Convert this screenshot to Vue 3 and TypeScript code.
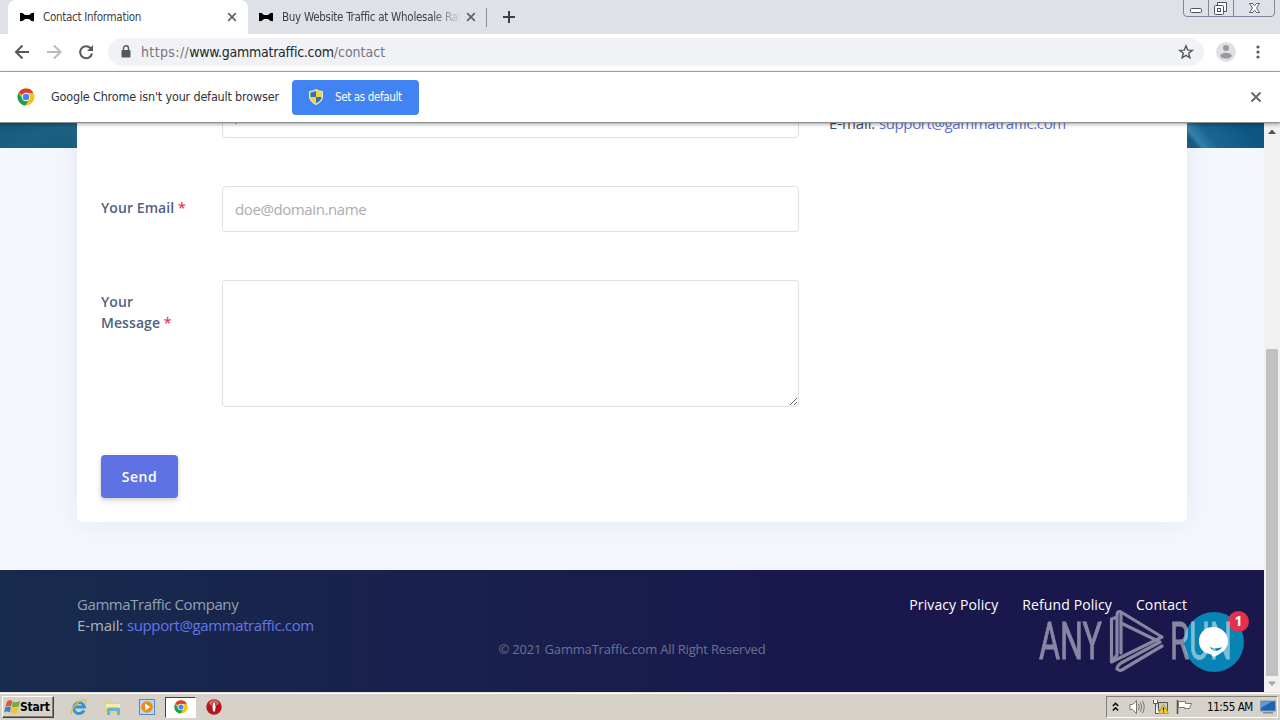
<script setup lang="ts">
interface Tab {
  title: string
  active: boolean
}

const tabs: Tab[] = [
  { title: 'Contact Information', active: true },
  { title: 'Buy Website Traffic at Wholesale Rates', active: false },
]

const footerLinks: string[] = ['Privacy Policy', 'Refund Policy', 'Contact']
</script>

<template>
  <div class="desktop">
    <header class="tabstrip">
      <div v-for="tab in tabs" :key="tab.title" class="tab" :class="{ active: tab.active }">
        <svg class="bow" width="16" height="10" viewBox="0 0 16 10">
          <path d="M1 1Q3 0 6 3h4Q13 0 15 1V9Q13 10 10 7H6Q3 10 1 9Z" fill="#000" />
        </svg>
        <span class="tab-title">{{ tab.title }}</span>
        <svg class="tab-close" width="10" height="10" viewBox="0 0 10 10">
          <path d="M1.200 1.200l7.600 7.600M8.800 1.200L1.200 8.800" stroke="#5f6368" stroke-width="1.700" />
        </svg>
      </div>
      <i class="tab-sep"></i>
      <svg class="new-tab" width="12" height="12" viewBox="0 0 12 12">
        <path d="M6 0v12M0 6h12" stroke="#3c4043" stroke-width="2" />
      </svg>
      <div class="win-buttons">
        <svg width="92" height="17" viewBox="0 0 92 17" fill="none">
          <path d="M.5 0V13Q.5 16.500 4 16.500H88Q91.500 16.500 91.500 13V0M25.500 0V16M50.500 0V16" stroke="#82869a" />
          <rect x="7.500" y="8.500" width="11" height="4" rx="1" stroke="#4c5064" fill="#fff" />
          <path d="M34.500 5.500V2.500H43.500V11.500H40.500" stroke="#4c5064" fill="#fff" />
          <rect x="31.500" y="5.500" width="9" height="9" rx="1" stroke="#4c5064" fill="#fff" />
          <rect x="34.500" y="8.500" width="3" height="3" stroke="#4c5064" />
          <path d="M66.500 3.500H69.500L71.500 5.800L73.500 3.500H76.500L73.500 8L76.500 12.500H73.500L71.500 10.200L69.500 12.500H66.500L69.500 8Z" stroke="#5c6072" fill="#fff" />
        </svg>
      </div>
    </header>

    <div class="toolbar">
      <svg width="96" height="20" viewBox="0 0 96 20" fill="none" stroke-width="2">
        <path d="M21 10H8.500M14.500 3.500L8 10L14.500 16.500" transform="translate(8 0)" stroke="#55585d" />
        <path d="M47 10H60M54 3.500L60.500 10L54 16.500" stroke="#b9bbbe" />
        <path d="M90.600 6.200A6 6 0 1 0 92 11.500" stroke="#55585d" />
        <path d="M93 3V9H87Z" fill="#55585d" />
      </svg>
      <div class="omnibox">
        <svg class="lock" width="10" height="13" viewBox="0 0 10 13">
          <rect x=".5" y="5" width="9" height="7.500" rx="1" fill="#55585d" />
          <path d="M2.500 5V3.300a2.500 2.500 0 0 1 5 0V5" fill="none" stroke="#55585d" stroke-width="1.400" />
        </svg>
        <span class="url"><span class="scheme">https://</span><b>www.gammatraffic.com</b>/contact</span>
        <svg class="star" width="16" height="16" viewBox="0 0 16 16">
          <path d="M8 1.800L9.700 6.100L14.300 6.400L10.700 9.300L11.900 13.800L8 11.300L4.100 13.800L5.300 9.300L1.700 6.400L6.300 6.100Z" fill="none" stroke="#55585d" stroke-width="1.400" />
        </svg>
      </div>
      <svg class="avatar" width="20" height="20" viewBox="0 0 20 20">
        <circle cx="10" cy="10" r="10" fill="#dfe0e2" />
        <circle cx="10" cy="6" r="3" fill="#97999c" />
        <ellipse cx="10" cy="13.700" rx="5.700" ry="2.900" fill="#97999c" />
      </svg>
      <svg class="kebab" width="4" height="14" viewBox="0 0 4 14" fill="#55585d">
        <circle cx="2" cy="2" r="1.600" /><circle cx="2" cy="7" r="1.600" /><circle cx="2" cy="12" r="1.600" />
      </svg>
    </div>

    <div class="infobar">
      <svg width="18" height="18" viewBox="0 0 18 18">
        <circle cx="9" cy="9" r="8.500" fill="#fbc116" />
        <path d="M9 9L1.600 4.800A8.500 8.500 0 0 1 16.400 4.800L9 5Z" fill="#df3b2f" />
        <path d="M1.600 4.800A8.500 8.500 0 0 0 8.500 17.500L12.400 11L5.600 11Z" fill="#1f9d55" />
        <circle cx="9" cy="9" r="4.200" fill="#fff" />
        <circle cx="9" cy="9" r="3.300" fill="#4285f4" />
      </svg>
      <span class="info-text">Google Chrome isn't your default browser</span>
      <button class="default-btn">
        <svg width="14" height="16" viewBox="0 0 14 16">
          <path d="M7 .5Q10 2.300 13.500 2.500V8Q13 13 7 15.500Q1 13 .5 8V2.500Q4 2.300 7 .5Z" fill="#f5d33c" stroke="#e4ecda" />
          <path d="M7 2V8H1.500V3.500Q4.500 3.300 7 2ZM7 8H12.500Q12 12 7 14.200Z" fill="#2b73c0" />
        </svg>
        <span>Set as default</span>
      </button>
      <svg class="info-close" width="12" height="12" viewBox="0 0 12 12">
        <path d="M1.500 1.500l9 9M10.500 1.500l-9 9" stroke="#63666a" stroke-width="1.800" />
      </svg>
    </div>

    <div class="viewport">
      <div class="page">
        <main class="hero-wrap">
          <section class="card">
            <form class="form" @submit.prevent>
              <div class="row">
                <label></label>
                <input type="text" placeholder="John Doe" />
              </div>
              <div class="row">
                <label>Your Email <em>*</em></label>
                <input type="text" placeholder="doe@domain.name" />
              </div>
              <div class="row">
                <label>Your Message <em>*</em></label>
                <textarea></textarea>
              </div>
              <button class="send">Send</button>
            </form>
            <aside class="side">E-mail: <a>support@gammatraffic.com</a></aside>
          </section>
        </main>
        <footer class="footer">
          <div class="footer-top">
            <p class="company">GammaTraffic Company<br /><span>E-mail: </span><a>support@gammatraffic.com</a></p>
            <nav><a v-for="link in footerLinks" :key="link">{{ link }}</a></nav>
          </div>
          <p class="copyright">© 2021 GammaTraffic.com All Right Reserved</p>
        </footer>
        <div class="chat">
          <svg width="60" height="60" viewBox="0 0 60 60">
            <circle cx="30" cy="30" r="30" fill="#0784b5" />
            <path d="M29 15C37 15 44 21 44 29C44 37 38 41 30 45L26 42C19 41 15 36 15 29C15 21 21 15 29 15Z" fill="#fff" />
            <path d="M26 35Q32 37.500 38 35Q36 39 31 39Q28 39 26 35Z" fill="#0784b5" />
          </svg>
          <span class="badge">1</span>
        </div>
      </div>
      <div class="scrollbar">
        <svg width="16" height="17" viewBox="0 0 16 17"><path d="M4 11L8 6.500L12 11Z" fill="#505050" /></svg>
        <i class="thumb"></i>
        <svg width="16" height="16" viewBox="0 0 16 16"><path d="M4 5.500L8 10L12 5.500Z" fill="#a3a3a3" /></svg>
      </div>
    </div>

    <div class="taskbar">
      <div class="start">
        <svg width="16" height="16" viewBox="0 0 16 16">
          <path d="M3 2.500Q5.500.500 8.300 2L7.200 7.500Q4.500 6 1.500 7.500Z" fill="#e4572c" />
          <path d="M9 2.500Q12 4 16 2L14.700 7.500Q11 9 7.900 7.800Z" fill="#6fae3c" />
          <path d="M1.300 8.300Q4 6.900 7 8.300L5.900 13.200Q3 11.700.2 13.200Z" fill="#3f7fc9" />
          <path d="M7.700 8.700Q11 10 14.500 8.300L13.300 13.700Q10 15.700 6.600 13.700Z" fill="#f3c02f" />
        </svg>
        <span>Start</span>
      </div>
      <div class="quick">
        <svg width="18" height="18" viewBox="0 0 18 18" fill="none">
          <path d="M14 12.500A5.500 5.500 0 1 1 14.500 9H5" stroke="#3394d6" stroke-width="2.800" />
          <path d="M2 16C-1 13 8 2 14 1.500Q17 1.500 15.500 5" stroke="#e8bd3c" stroke-width="1.500" />
        </svg>
        <svg width="18" height="18" viewBox="0 0 18 18">
          <path d="M1 3H6L7 5H16V15H1Z" fill="#e9d071" /><path d="M2 6H16V10H2Z" fill="#f8eca8" />
          <path d="M3 17V11Q3 9.500 5 9.500H14Q16 9.500 16 11V17H13V13H6V17Z" fill="#67b2dc" />
        </svg>
        <svg width="18" height="18" viewBox="0 0 18 18">
          <rect x="1.500" y="1.500" width="15" height="15" fill="#b9d8ef" stroke="#4f8cc6" />
          <circle cx="9" cy="9" r="5.800" fill="#f18a16" /><path d="M7 5.500L12.300 9L7 12.500Z" fill="#fff" />
        </svg>
        <div class="task-active">
          <svg width="14" height="14" viewBox="0 0 18 18">
            <circle cx="9" cy="9" r="8.500" fill="#fbc116" />
            <path d="M9 9L1.600 4.800A8.500 8.500 0 0 1 16.400 4.800L9 5Z" fill="#df3b2f" />
            <path d="M1.600 4.800A8.500 8.500 0 0 0 8.500 17.500L12.400 11L5.600 11Z" fill="#1f9d55" />
            <circle cx="9" cy="9" r="4.200" fill="#fff" />
            <circle cx="9" cy="9" r="3.300" fill="#4285f4" />
          </svg>
        </div>
        <svg width="18" height="18" viewBox="0 0 18 18">
          <circle cx="9" cy="9" r="7.700" fill="#b5151b" />
          <ellipse cx="9" cy="5" rx="5" ry="3" fill="#dd6464" />
          <ellipse cx="9" cy="9" rx="2" ry="5.200" fill="#fff" stroke="#8f0c10" stroke-width=".8" />
        </svg>
      </div>
      <div class="tray">
        <svg class="chev" width="7" height="10" viewBox="0 0 7 10" fill="none">
          <path d="M.8 4L3.500 1.300L6.200 4M.8 8.500L3.500 5.800L6.200 8.500" stroke="#000" stroke-width="1.500" />
        </svg>
        <svg class="speaker" width="17" height="16" viewBox="0 0 17 16" fill="none" stroke="#777">
          <path d="M1 5.500H3.500L7.500 1.500V14.500L3.500 10.500H1Z" fill="#fff" />
          <path d="M9.500 5Q11.300 8 9.500 11M11.500 3.500Q14 8 11.500 12.500M13.500 2Q17 8 13.500 14" />
        </svg>
        <svg class="net" width="17" height="16" viewBox="0 0 17 16">
          <path d="M6.500 3.500H15.500V11.500H6.500Z" fill="#c9c9c4" stroke="#555" />
          <path d="M1.500 1V4.500H5.500V1M3.500 5V14.500H7" fill="#fff" stroke="#555" />
          <path d="M11.500 5.500L16.500 14.500H6.500Z" fill="#f5cf21" stroke="#b58b00" stroke-width=".7" />
          <path d="M11.500 8.500V11.500M11.500 12.400V13.500" stroke="#222" stroke-width="1.300" />
        </svg>
        <svg class="flag" width="18" height="16" viewBox="0 0 18 16">
          <path d="M1.500 1V15" stroke="#555" stroke-width="1.600" />
          <path d="M2.500 2.500H9.500V4.500H15.500L13.500 9.500H8.500V8.500H2.500Z" fill="#fff" stroke="#777" />
        </svg>
        <span class="clock">11:55 AM</span>
        <svg class="show" width="16" height="14" viewBox="0 0 16 14">
          <rect x=".5" y="1" width="15" height="10" fill="#2163b3" stroke="#7f9cbd" />
          <path d="M1 1.500H12L1 8Z" fill="#5b9add" /><rect x="3" y="12" width="10" height="1.500" fill="#7d8b99" />
        </svg>
      </div>
    </div>

    <svg class="watermark" width="196" height="66" viewBox="0 0 196 66">
      <text x="1" y="51" textLength="63" lengthAdjust="spacingAndGlyphs">ANY</text>
      <g fill="none" stroke="#fff" stroke-width="3.200" stroke-linejoin="round" stroke-linecap="round">
        <path d="M79 9L73.500 11V54L124 29L83 4V45M83 4Q79 2 79 8V47L73.500 54M83 15L122 34L83 55Q79 58 79 61Q83 64 87 60L124 38" />
      </g>
      <text x="132" y="51" textLength="62" lengthAdjust="spacingAndGlyphs">RUN</text>
    </svg>
  </div>
</template>

<style>
body {
  margin: 0;
  overflow: hidden;
}
</style>

<style scoped>
.desktop {
  position: relative;
  width: 1280px;
  height: 720px;
  display: flex;
  flex-direction: column;
  overflow: hidden;
  font-family: "DejaVu Sans Condensed", "DejaVu Sans", sans-serif;
  background: #fff;
}
svg {
  display: block;
  flex: none;
}
.tabstrip {
  height: 34px;
  flex: none;
  display: flex;
  align-items: center;
  background: #dee1e6;
  padding-left: 8px;
}
.tab {
  width: 240px;
  height: 34px;
  box-sizing: border-box;
  display: flex;
  align-items: center;
  padding: 0 11px;
  color: #3f4247;
}
.tab.active {
  background: #fff;
  border-radius: 8px 8px 0 0;
}
.tab:not(.active) {
  margin-left: -1px;
}
.tab-title {
  width: 177px;
  margin: 0 7px 0 8px;
  font-size: 11.5px;
  letter-spacing: -0.28px;
  white-space: nowrap;
  overflow: hidden;
  mask-image: linear-gradient(90deg, #000 150px, transparent 180px);
}
.tab.active .tab-title {
  mask-image: none;
}
.tab-sep {
  width: 1px;
  height: 19px;
  margin-left: -1px;
  background: #8a8d92;
}
.new-tab {
  margin-left: 16px;
}
.win-buttons {
  margin-left: auto;
  margin-right: 5px;
  align-self: flex-start;
}
.toolbar {
  height: 37px;
  flex: none;
  display: flex;
  align-items: center;
  box-sizing: content-box;
  border-bottom: 1px solid #abadaf;
  background: #fff;
}
.toolbar > svg,
.omnibox > svg {
  margin-top: -1px;
}
.omnibox {
  width: 1096px;
  height: 28px;
  margin-left: 12px;
  margin-top: -1px;
  box-sizing: border-box;
  display: flex;
  align-items: center;
  padding: 0 10px 0 13px;
  border-radius: 14px;
  background: #f0f2f5;
}
.url {
  margin-left: 10px;
  font-size: 14px;
  color: #73777c;
}
.scheme {
  letter-spacing: 0.37px;
}
.url b {
  font-weight: 400;
  letter-spacing: -0.25px;
  color: #24272b;
}
.omnibox > .star {
  margin-left: auto;
}
.avatar {
  margin-left: 12px;
}
.kebab {
  margin-left: 20px;
}
.infobar {
  position: relative;
  z-index: 2;
  height: 51px;
  flex: none;
  display: flex;
  align-items: center;
  padding: 0 18px 0 17px;
  box-sizing: border-box;
  border-bottom: 1px solid #8d9091;
  background: #fff;
  box-shadow: 0 1px 4px rgba(0, 0, 0, 0.4);
}
.info-text {
  width: 229px;
  margin: -2px 12px 0 16px;
  font-size: 12.5px;
  letter-spacing: -0.18px;
  color: #303336;
  white-space: nowrap;
}
.default-btn {
  width: 127px;
  height: 35px;
  display: flex;
  align-items: center;
  gap: 12px;
  padding: 0 17px;
  border: 0;
  border-radius: 4px;
  background: #4283f3;
  color: #fff;
  font-family: inherit;
  font-size: 11.5px;
  letter-spacing: -0.36px;
  white-space: nowrap;
}
.info-close {
  margin-left: auto;
}
.viewport {
  flex: 1;
  min-height: 0;
  display: flex;
  overflow: hidden;
}
.page {
  position: relative;
  width: 1264px;
  height: 569px;
  display: flex;
  flex-direction: column;
  overflow: hidden;
  background: #f4f7fd;
  font-family: "Open Sans", sans-serif;
}
.hero-wrap {
  height: 447px;
  flex: none;
  padding: 0 77px;
  background:
    linear-gradient(50deg, #12577f 0 8px, #2f83ac 13px, #1a658f 25px, #0b5580 62px) no-repeat right top / 77px 25px,
    linear-gradient(155deg, #14587a, #1d6182 50%, #165a7b) no-repeat left top / 77px 25px;
}
.card {
  width: 1110px;
  height: 454px;
  margin-top: -55px;
  box-sizing: border-box;
  padding: 24px;
  display: flex;
  border-radius: 5px;
  background: #fff;
  box-shadow: 0 0 24px rgba(136, 152, 170, 0.15);
}
.form {
  width: 698px;
  display: flex;
  flex-direction: column;
  gap: 48px;
}
.row {
  display: flex;
}
label {
  width: 91px;
  margin-right: 30px;
  padding-top: 11px;
  font-size: 14px;
  line-height: 21px;
  font-weight: 600;
  letter-spacing: 0.07px;
  color: #525f7f;
}
label em {
  font-style: normal;
  color: #f0385c;
}
input,
textarea {
  width: 577px;
  height: 46px;
  box-sizing: border-box;
  padding: 0 12px;
  border: 1px solid #dee1e4;
  border-radius: 4px;
  background: #fff;
  font-family: inherit;
  font-size: 15px;
  letter-spacing: -0.4px;
  outline: none;
}
textarea {
  display: block;
  height: 127px;
}
input::placeholder {
  color: #aaadb0;
  opacity: 1;
}
.send {
  width: 77px;
  height: 43px;
  border: 0;
  border-radius: 4px;
  background: #5e72e4;
  color: #fff;
  font-family: inherit;
  font-size: 14px;
  font-weight: 600;
  letter-spacing: 0.5px;
  box-shadow: 0 3px 6px rgba(50, 50, 93, 0.16), 0 1px 3px rgba(0, 0, 0, 0.1);
}
.side {
  margin: 21px 0 0 30px;
  font-size: 15px;
  line-height: 21px;
  letter-spacing: -0.1px;
  color: #454b58;
  white-space: nowrap;
}
.side a {
  letter-spacing: -0.39px;
  color: #5e6fd8;
}
.footer {
  flex: 1;
  background: linear-gradient(90deg, #172b4d 0%, #1a174d 67%, #1a174d 100%);
  padding: 24px 77px 0;
}
.footer-top {
  display: flex;
  justify-content: space-between;
  font-size: 15px;
  line-height: 21px;
  white-space: nowrap;
}
.footer p {
  margin: 0;
}
.company {
  letter-spacing: -0.42px;
  color: #94a0b2;
}
.company span {
  letter-spacing: -0.1px;
  color: #adb5bd;
}
.company a {
  letter-spacing: -0.39px;
  color: #6675e6;
}
nav {
  display: flex;
  gap: 24px;
  color: #fff;
  font-size: 14px;
  letter-spacing: 0.11px;
}
.footer .copyright {
  margin-top: 4px;
  text-align: center;
  font-size: 13px;
  line-height: 19px;
  letter-spacing: -0.18px;
  color: #69738f;
}
.chat {
  position: absolute;
  right: 20px;
  bottom: 20px;
}
.badge {
  position: absolute;
  top: -1px;
  right: -5px;
  width: 21px;
  height: 21px;
  border-radius: 50%;
  background: #e2304d;
  color: #fff;
  font: 700 14px/20px "Open Sans", sans-serif;
  text-align: center;
}
.scrollbar {
  width: 16px;
  display: flex;
  flex-direction: column;
  justify-content: flex-end;
  background: #f1f1f1;
}
.scrollbar svg:first-child {
  margin-bottom: auto;
}
.thumb {
  height: 327px;
  margin: 0 2px;
  background: #c1c1c1;
}
.taskbar {
  height: 28px;
  flex: none;
  display: flex;
  align-items: center;
  box-sizing: border-box;
  padding: 2px 2px 0;
  background: #d6d2c9;
  box-shadow: inset 0 1px #e3e0d9, inset 0 2px #fff;
}
.start {
  width: 52px;
  height: 22px;
  box-sizing: border-box;
  display: flex;
  align-items: center;
  padding-left: 1px;
  border: 1px solid;
  border-color: #fff #404040 #404040 #fff;
  box-shadow: inset -1px -1px #848078;
  font-size: 12px;
  font-weight: 700;
  letter-spacing: -0.2px;
  color: #000;
}
.quick {
  display: flex;
  align-items: center;
  margin-left: 16px;
  gap: 16px;
}
.task-active {
  width: 31px;
  height: 21px;
  margin: 0 -7px;
  box-sizing: border-box;
  display: flex;
  align-items: center;
  justify-content: center;
  border: 1px solid;
  border-color: #404040 #fff #fff #404040;
  background: #fff;
}
.tray {
  width: 172px;
  height: 22px;
  margin-left: auto;
  box-sizing: border-box;
  display: flex;
  align-items: center;
  padding-left: 5px;
  border: 1px solid;
  border-color: #848078 #fff #fff #848078;
}
.speaker {
  margin-left: 10px;
}
.net {
  margin-left: 6px;
}
.flag {
  margin-left: 7px;
}
.clock {
  width: 47px;
  margin: 0 6px 0 13px;
  font-size: 11.5px;
  letter-spacing: -0.4px;
  white-space: nowrap;
  color: #000;
}
.watermark {
  position: absolute;
  left: 1038px;
  top: 608px;
  z-index: 5;
  opacity: 0.48;
}
.watermark text {
  font-family: Roboto, sans-serif;
  font-size: 52px;
  fill: #fff;
  stroke: #fff;
  stroke-width: 0.8px;
}
</style>
